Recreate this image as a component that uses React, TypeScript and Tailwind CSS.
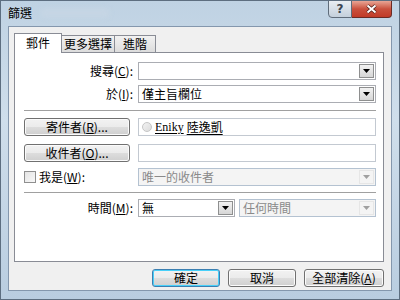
import React from 'react';

const cjk = { fontFamily: '"Noto Sans CJK TC", "Noto Sans", sans-serif' };

function Arrow({ disabled }: { disabled?: boolean }) {
  return (
    <svg width="7" height="4" viewBox="0 0 7 4">
      <path d="M0 0h7L3.5 4z" fill={disabled ? '#a0a0a0' : '#000'} />
    </svg>
  );
}

function Combo({ text, disabled, className = '' }: { text?: string; disabled?: boolean; className?: string }) {
  return (
    <div
      className={`h-[18px] flex items-center border ${disabled ? 'border-[#b4c2d1] bg-[#f4f4f4] text-[#8a8a8a]' : 'border-[#abadb3] bg-white text-black'} ${className}`}
    >
      <span className="flex-1 pl-[3px] text-[12px] leading-none">{text}</span>
      <div
        className={`w-[15px] h-[14px] mr-[1px] flex items-center justify-center border ${disabled ? 'border-[#e6e6e6] bg-[#f4f4f4]' : 'border-[#8e8f8f] bg-gradient-to-b from-[#f2f2f2] to-[#d6d6d6]'}`}
      >
        <Arrow disabled={disabled} />
      </div>
    </div>
  );
}

function Btn({ children, className = '', def }: { children: React.ReactNode; className?: string; def?: boolean }) {
  return (
    <div
      className={`h-[18px] flex items-center justify-center rounded-[3px] border text-[12px] leading-none ${def ? 'border-[#3c7fb1] shadow-[inset_0_0_0_1px_#48d0f9]' : 'border-[#707070] shadow-[inset_0_0_0_1px_#fbfbfb]'} bg-[linear-gradient(to_bottom,#f2f2f2_0%,#ebebeb_50%,#dddddd_51%,#cfcfcf_100%)] ${className}`}
    >
      {children}
    </div>
  );
}

function U({ c }: { c: string }) {
  return <span className="underline underline-offset-1">{c}</span>;
}

export default function App() {
  return (
    <div
      className="w-[400px] h-[300px] flex flex-col px-[7px] pb-[8px] bg-[linear-gradient(to_bottom,#bfd2e3,#cfdeeb_40%,#b9cde0)] border border-[#5d6e80] overflow-hidden"
      style={cjk}
    >
      {/* title bar */}
      <div className="h-[24px] flex items-start shrink-0">
        <div className="pt-[6px] text-[12px] leading-none text-black">篩選</div>
        <div className="ml-[8px] mt-[7px] w-[70px] h-[10px] rounded-full bg-[#c5d5e4] blur-[2px]" />
        <div className="flex-1" />
        <div className="flex -mt-px">
          <div className="w-[24px] h-[18px] flex items-center justify-center rounded-bl-[4px] border border-[#5f6c7a] bg-gradient-to-b from-[#e9eef3] to-[#c4d0dc] text-[12px] font-bold text-[#3a4450]" style={{ fontFamily: '"DejaVu Sans", sans-serif' }}>
            ?
          </div>
          <div className="w-[40px] h-[18px] flex items-center justify-center rounded-br-[4px] border border-l-0 border-[#6b2a24] bg-gradient-to-b from-[#e8a595] via-[#c9503d] to-[#c13a27]">
            <svg width="11" height="10" viewBox="0 0 11 10">
              <path d="M1.5 1.5l8 7M9.5 1.5l-8 7" stroke="#4a1a14" strokeWidth="3.4" />
              <path d="M1.5 1.5l8 7M9.5 1.5l-8 7" stroke="#fff" strokeWidth="2" />
            </svg>
          </div>
        </div>
      </div>

      {/* client area */}
      <div className="flex-1 mt-px flex flex-col border border-[#8497ad] bg-[#f0f0f0] pl-[5px] pr-[7px] pt-[5px]">
        {/* tabs */}
        <div className="flex items-end h-[20px] text-[12px] leading-none">
          <div className="h-[20px] w-[48px] flex items-center justify-center bg-white border border-b-0 border-[#898c95] relative z-10 -mb-px pb-px">
            郵件
          </div>
          <div className="h-[17px] w-[53px] flex items-center justify-center border border-l-0 border-b-0 border-[#898c95] bg-gradient-to-b from-[#f2f2f2] to-[#dcdcdc]">
            更多選擇
          </div>
          <div className="h-[17px] w-[41px] flex items-center justify-center border border-l-0 border-b-0 border-[#898c95] bg-gradient-to-b from-[#f2f2f2] to-[#dcdcdc]">
            進階
          </div>
        </div>

        {/* panel */}
        <div className="h-[210px] border border-[#898c95] bg-white pt-[9px] pl-[9px] pr-[7px] text-[12px] leading-none">
          <div className="flex flex-col gap-[5px]">
            <div className="flex items-center">
              <div className="w-[114px] text-right pr-[5px]">搜尋(<U c="C" />):</div>
              <Combo className="flex-1" />
            </div>
            <div className="flex items-center">
              <div className="w-[114px] text-right pr-[5px]">於(<U c="I" />):</div>
              <Combo className="flex-1" text="僅主旨欄位" />
            </div>
          </div>

          <div className="h-px bg-[#a0a0a0] my-[7px] ml-[0px]" />

          <div className="flex flex-col gap-[8px]">
            <div className="flex items-center">
              <Btn className="w-[106px]">寄件者(<U c="R" />)...</Btn>
              <div className="w-[8px]" />
              <div className="flex-1 h-[18px] border border-[#c3c9d1] bg-white flex items-center pl-[3px]">
                <span className="w-[10px] h-[10px] rounded-full border border-[#c6c6c6] bg-gradient-to-br from-[#f2f2f2] to-[#dcdcdc] mr-[3px]" />
                <span className="underline underline-offset-2" style={{ fontFamily: '"Liberation Serif", "Noto Sans CJK TC", serif' }}>
                  Eniky
                </span>
                <span className="underline underline-offset-2 ml-[3px]">陸逸凱</span>
              </div>
            </div>
            <div className="flex items-center">
              <Btn className="w-[106px]">收件者(<U c="O" />)...</Btn>
              <div className="w-[8px]" />
              <div className="flex-1 h-[18px] border border-[#c3c9d1] bg-white" />
            </div>
          </div>

          <div className="flex items-center mt-[6px]">
            <div className="w-[114px] flex items-center">
              <span className="w-[12px] h-[12px] border border-[#8f8f8f] bg-gradient-to-br from-[#e4e4e4] to-[#f8f8f8] mr-[3px]" />
              我是(<U c="W" />):
            </div>
            <Combo className="flex-1" text="唯一的收件者" disabled />
          </div>

          <div className="h-px bg-[#a0a0a0] my-[6px]" />

          <div className="flex items-center mt-[1px]">
            <div className="w-[114px] text-right pr-[5px]">時間(<U c="M" />):</div>
            <Combo className="w-[97px]" text="無" />
            <div className="w-[4px]" />
            <Combo className="flex-1" text="任何時間" disabled />
          </div>
        </div>

        {/* bottom buttons */}
        <div className="flex justify-end gap-[8px] mt-[7px] pr-0">
          <Btn className="w-[68px]" def>確定</Btn>
          <Btn className="w-[68px]">取消</Btn>
          <Btn className="w-[80px]">全部清除(<U c="A" />)</Btn>
        </div>
      </div>
    </div>
  );
}
